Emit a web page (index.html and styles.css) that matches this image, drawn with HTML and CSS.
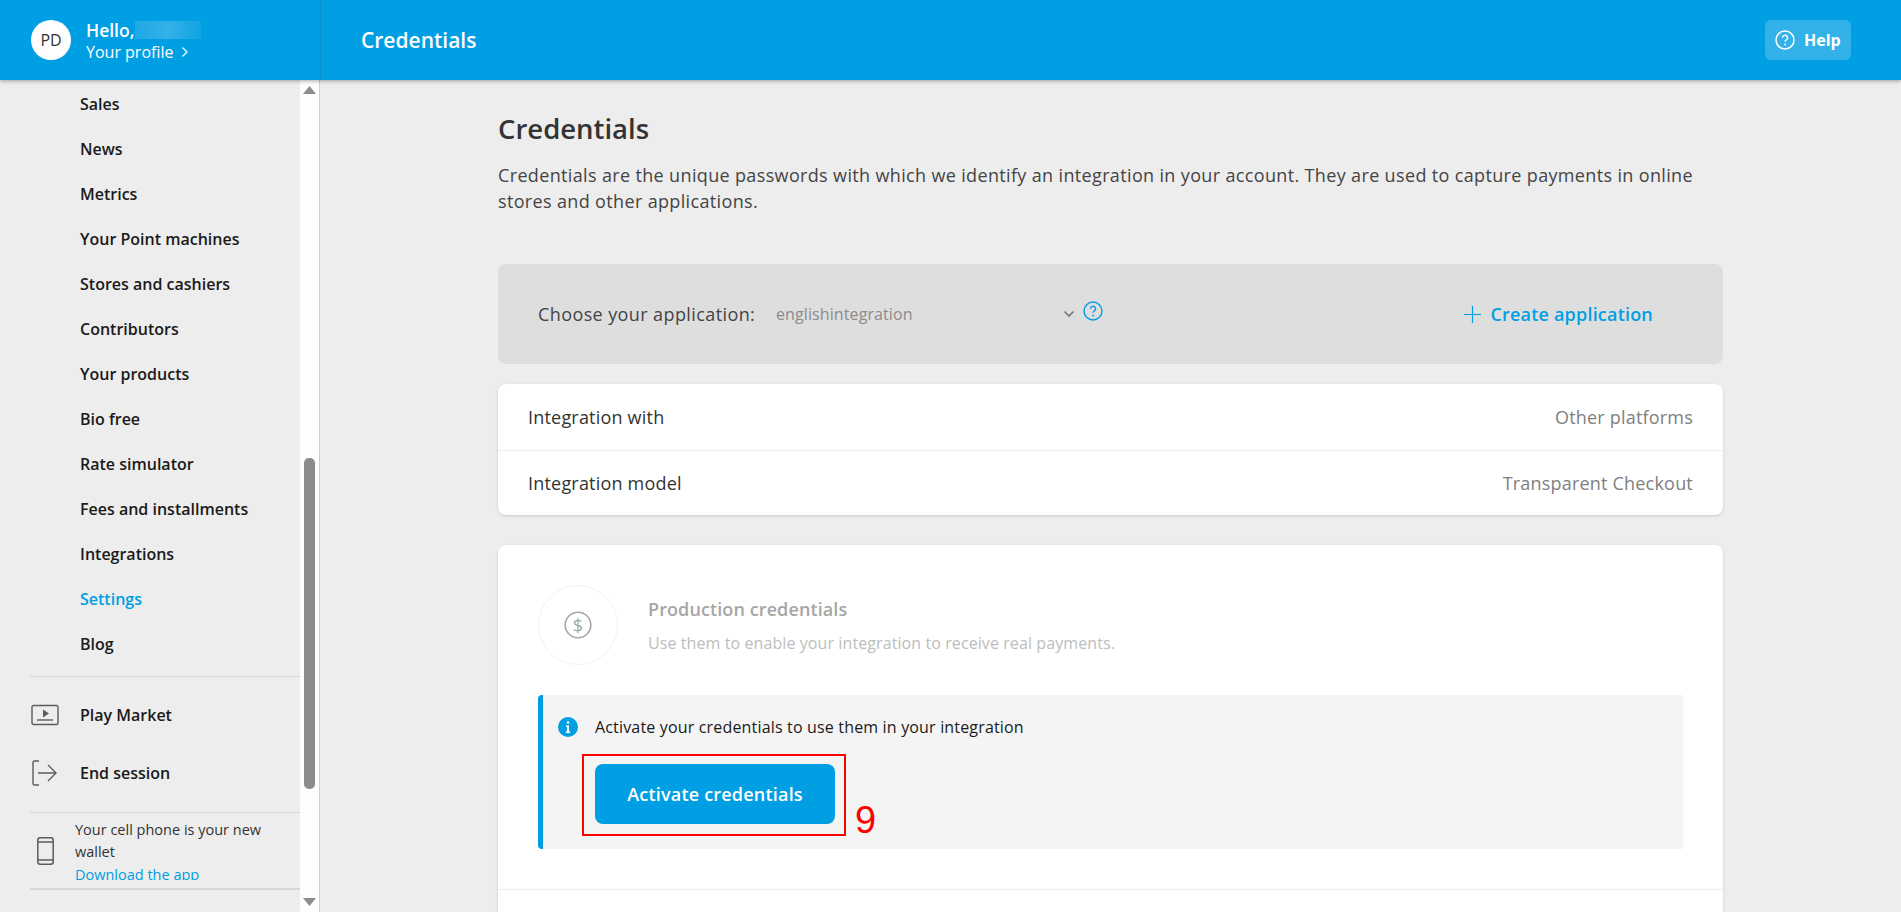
FILE: index.html
```html
<!DOCTYPE html>
<html lang="en">
<head>
<meta charset="utf-8">
<title>Credentials</title>
<link rel="stylesheet" href="styles.css">
</head>
<body>
<header class="topbar">
  <div class="profile">
    <div class="avatar">PD</div>
    <div class="profile-text">
      <div class="hello">Hello,<span class="blur"></span></div>
      <div class="your-profile">Your profile
        <svg class="chev-r" width="8" height="12" viewBox="0 0 8 12"><path d="M1.500 1.500 6 6l-4.500 4.500" fill="none" stroke="#fff" stroke-width="1.200"/></svg>
      </div>
    </div>
  </div>
  <div class="top-title">Credentials</div>
  <a class="help">
    <svg width="20" height="20" viewBox="0 0 20 20"><circle cx="10" cy="10" r="9" fill="none" stroke="#fff" stroke-width="1.500"/><path d="M7.500 7.800a2.500 2.500 0 1 1 3.700 2.200c-.8.500-1.200.9-1.200 1.800" fill="none" stroke="#fff" stroke-width="1.400"/><circle cx="10" cy="14.500" r=".9" fill="#fff"/></svg>
    <span>Help</span>
  </a>
</header>
<div class="shell">
  <aside class="sidebar">
    <div class="side-content">
      <nav class="menu">
        <a class="menu-item">Sales</a>
        <a class="menu-item">News</a>
        <a class="menu-item">Metrics</a>
        <a class="menu-item">Your Point machines</a>
        <a class="menu-item">Stores and cashiers</a>
        <a class="menu-item">Contributors</a>
        <a class="menu-item">Your products</a>
        <a class="menu-item">Bio free</a>
        <a class="menu-item">Rate simulator</a>
        <a class="menu-item">Fees and installments</a>
        <a class="menu-item">Integrations</a>
        <a class="menu-item active">Settings</a>
        <a class="menu-item">Blog</a>
      </nav>
      <div class="extra">
        <a class="extra-item">
          <svg class="extra-icon" width="28" height="22" viewBox="0 0 28 22"><rect x="1" y="1.500" width="26" height="19" rx="1.500" fill="none" stroke="#5c5c5c" stroke-width="1.400"/><path d="M12 5.500l6 4-6 4z" fill="#5c5c5c"/><path d="M6 16h16" stroke="#5c5c5c" stroke-width="1.400"/></svg>
          <span>Play Market</span>
        </a>
        <a class="extra-item">
          <svg class="extra-icon" width="28" height="26" viewBox="0 0 28 26"><path d="M8 1H3.500C2.600 1 2 1.600 2 2.500v21c0 .9.600 1.500 1.500 1.500H8" fill="none" stroke="#5c5c5c" stroke-width="1.400"/><path d="M7 13h18M17 5l8 8-8 8" fill="none" stroke="#5c5c5c" stroke-width="1.400"/></svg>
          <span>End session</span>
        </a>
      </div>
      <div class="promo">
        <svg class="promo-icon" width="17" height="28" viewBox="0 0 17 28"><rect x=".8" y=".8" width="15.400" height="26.400" rx="2.500" fill="none" stroke="#5c5c5c" stroke-width="1.500"/><path d="M1 5h15M1 23h15" stroke="#5c5c5c" stroke-width="1.300"/></svg>
        <div class="promo-text">
          <p>Your cell phone is your new wallet</p>
          <a>Download the app</a>
        </div>
      </div>
    </div>
    <div class="scrollbar">
      <svg class="sb-arrow" width="13" height="8" viewBox="0 0 13 8"><path d="M6.500 0 13 8H0z" fill="#8c8c8c"/></svg>
      <div class="sb-track"><div class="sb-thumb"></div></div>
      <svg class="sb-arrow" width="13" height="8" viewBox="0 0 13 8"><path d="M6.500 8 13 0H0z" fill="#8c8c8c"/></svg>
    </div>
  </aside>
  <main class="main">
    <h1 class="page-title">Credentials</h1>
    <p class="page-desc">Credentials are the unique passwords with which we identify an integration in your account. They are used to capture payments in online stores and other applications.</p>
    <section class="app-select">
      <span class="app-label">Choose your application:</span>
      <span class="app-value">englishintegration</span>
      <svg class="app-chev" width="12" height="8" viewBox="0 0 12 8"><path d="M1.500 1.500 6 6l4.500-4.500" fill="none" stroke="#777" stroke-width="1.600"/></svg>
      <svg class="app-q" width="20" height="20" viewBox="0 0 20 20"><circle cx="10" cy="10" r="9" fill="none" stroke="#009ee3" stroke-width="1.400"/><path d="M7.500 7.800a2.500 2.500 0 1 1 3.700 2.200c-.8.500-1.200.9-1.200 1.800" fill="none" stroke="#009ee3" stroke-width="1.400"/><circle cx="10" cy="14.500" r=".9" fill="#009ee3"/></svg>
      <a class="create">
        <svg width="17" height="17" viewBox="0 0 17 17"><path d="M8.500 0v17M0 8.500h17" stroke="#009ee3" stroke-width="1.200"/></svg>
        <span>Create application</span>
      </a>
    </section>
    <section class="card info-card">
      <div class="info-row"><span>Integration with</span><span class="info-val">Other platforms</span></div>
      <div class="info-row"><span>Integration model</span><span class="info-val">Transparent Checkout</span></div>
    </section>
    <section class="card prod-card">
      <div class="prod-body">
        <div class="prod-head">
          <div class="prod-circle">
            <svg width="28" height="28" viewBox="0 0 28 28"><circle cx="14" cy="14" r="12.800" fill="none" stroke="#a6a6a6" stroke-width="1.600"/><text x="14" y="20.500" text-anchor="middle" class="dollar">$</text></svg>
          </div>
          <div>
            <div class="prod-title">Production credentials</div>
            <div class="prod-sub">Use them to enable your integration to receive real payments.</div>
          </div>
        </div>
        <div class="alert">
          <div class="alert-line">
            <svg class="alert-icon" width="20" height="20" viewBox="0 0 20 20"><circle cx="10" cy="10" r="10" fill="#009ee3"/><circle cx="10" cy="5.500" r="1.300" fill="#fff"/><path d="M8 8.500h3v6h1.200V16H7.800v-1.500H9V10H8z" fill="#fff"/></svg>
            <span>Activate your credentials to use them in your integration</span>
          </div>
          <div class="btn-wrap">
            <button class="btn">Activate credentials</button>
            <span class="mark"></span>
            <span class="mark-num">9</span>
          </div>
        </div>
      </div>
    </section>
  </main>
</div>
</body>
</html>
```
FILE: styles.css
```css
* { box-sizing: border-box; }
html, body { margin: 0; height: 100%; overflow: hidden; }
body {
  font-family: "Open Sans", "Liberation Sans", sans-serif;
  background: #ededed;
  color: #333;
  display: flex;
  flex-direction: column;
  height: 912px;
}
.topbar {
  flex: 0 0 80px;
  display: flex;
  align-items: center;
  background: #009ee3;
  color: #fff;
  box-shadow: 0 1px 4px rgba(0,0,0,.35);
  position: relative;
  z-index: 2;
}
.profile {
  width: 321px;
  height: 80px;
  padding-left: 31px;
  display: flex;
  align-items: center;
  gap: 15px;
  border-right: 1px solid #0a92cf;
}
.avatar {
  width: 40px;
  height: 40px;
  border-radius: 50%;
  background: #fff;
  color: #333;
  font-size: 16px;
  display: flex;
  align-items: center;
  justify-content: center;
}
.profile-text { padding-top: 2px; }
.hello {
  font-size: 17.500px;
  font-weight: 600;
  line-height: 22px;
  display: flex;
  align-items: center;
}
.blur {
  display: inline-block;
  width: 66px;
  height: 18px;
  margin-left: 1px;
  background: linear-gradient(90deg, #1ea9e6, #33b1e8 50%, #12a4e4);
}
.your-profile { font-size: 16px; line-height: 22px; display: flex; align-items: center; gap: 8px; }
.top-title { margin-left: 40px; font-size: 21px; font-weight: 600; flex: 1; }
.help {
  width: 86px;
  height: 40px;
  margin-right: 50px;
  padding-left: 10px;
  border-radius: 6px;
  background: #33b1e9;
  display: flex;
  align-items: center;
  gap: 9px;
  font-size: 16px;
  font-weight: 700;
}
.shell { flex: 1; display: flex; min-height: 0; }
.sidebar {
  flex: 0 0 320px;
  display: flex;
  border-right: 1px solid #cfcfcf;
  overflow: hidden;
}
.side-content { flex: 1; padding-left: 30px; min-width: 0; }
.menu { padding: 1px 0 10px; border-bottom: 1px solid #d6d6d6; }
.menu-item {
  display: flex;
  align-items: center;
  height: 45px;
  padding-left: 50px;
  font-size: 16px;
  font-weight: 600;
  color: #1a1a1a;
}
.menu-item.active { color: #009ee3; }
.extra { padding: 9px 0 10px; border-bottom: 1px solid #d6d6d6; }
.extra-item {
  height: 58px;
  display: flex;
  align-items: center;
  font-size: 16px;
  font-weight: 600;
  color: #1a1a1a;
}
.extra-icon { margin-left: 1px; margin-right: 21px; }
.promo {
  height: 77px;
  display: flex;
  align-items: center;
  border-bottom: 2px solid #d6d6d6;
}
.promo-icon { margin-left: 7px; margin-right: 21px; flex: none; }
.promo-text { width: 205px; font-size: 14.500px; line-height: 22px; height: 67px; overflow: hidden; align-self: flex-start; padding-top: 6px; }
.promo-text p { margin: 0; color: #333; }
.promo-text a { color: #009ee3; display: block; line-height: 24px; }
.scrollbar {
  flex: 0 0 19px;
  background: #fdfdfd;
  display: flex;
  flex-direction: column;
  align-items: center;
  padding: 6px 0 6px;
}
.sb-arrow { flex: none; }
.sb-track { flex: 1; width: 11px; padding-top: 364px; }
.sb-thumb { width: 11px; height: 331px; background: #8c8c8c; border-radius: 5px; }
.main { flex: 1; padding: 0 178px; min-width: 0; min-height: 0; overflow: hidden; }
.page-title { margin: 32px 0 0; font-size: 27.500px; line-height: 34px; font-weight: 600; color: #333; }
.page-desc { margin: 17px 0 0; font-size: 18px; letter-spacing: .35px; line-height: 25.500px; color: #444; }
.app-select {
  margin-top: 50px;
  height: 100px;
  background: #dedede;
  border-radius: 8px;
  padding: 0 70px 0 40px;
  display: flex;
  align-items: center;
}
.app-label { font-size: 18px; letter-spacing: .4px; width: 238px; flex: none; color: #444; white-space: nowrap; }
.app-value { font-size: 16px; letter-spacing: .1px; width: 287px; flex: none; color: #8c8c8c; }
.app-chev { flex: none; }
.app-q { margin-left: 8px; margin-top: -6px; flex: none; }
.create { margin-left: auto; display: flex; align-items: center; gap: 9px; color: #009ee3; font-size: 18px; letter-spacing: .2px; font-weight: 600; }
.card { background: #fff; border-radius: 8px; box-shadow: 0 1px 3px rgba(0,0,0,.15); }
.info-card { margin-top: 20px; }
.info-row {
  height: 65.500px;
  padding: 0 30px;
  display: flex;
  justify-content: space-between;
  align-items: center;
  font-size: 18px;
  letter-spacing: .2px;
  color: #333;
}
.info-row + .info-row { border-top: 1px solid #ededed; }
.info-val { color: #808080; }
.prod-card { margin-top: 30px; height: 500px; }
.prod-body { height: 345px; padding: 40px 40px 0; border-bottom: 1px solid #ededed; }
.prod-head { display: flex; align-items: center; gap: 30px; height: 80px; }
.prod-circle {
  width: 80px;
  height: 80px;
  flex: none;
  border: 1px solid #f2f2f2;
  border-radius: 50%;
  display: flex;
  align-items: center;
  justify-content: center;
}
.dollar { font-size: 18px; fill: #a6a6a6; font-family: "Open Sans", sans-serif; }
.prod-title { font-size: 18px; letter-spacing: .1px; font-weight: 600; color: #a6a6a6; }
.prod-sub { margin-top: 11px; font-size: 16px; letter-spacing: .09px; color: #bdbdbd; }
.alert {
  margin-top: 30px;
  height: 154px;
  background: #f4f4f4;
  border-left: 5px solid #009ee3;
  border-radius: 4px 0 0 4px;
  padding: 21px 0 0 15px;
}
.alert-line { display: flex; align-items: center; gap: 17px; font-size: 16px; letter-spacing: .17px; color: #1a1a1a; }
.btn-wrap { position: relative; margin: 26px 0 0 37px; width: 240px; height: 60px; }
.btn {
  width: 240px;
  height: 60px;
  border: 0;
  border-radius: 8px;
  background: #009ee3;
  color: #fff;
  font: 600 18px "Open Sans", sans-serif;
  letter-spacing: .2px;
}
.mark {
  position: absolute;
  left: -13px;
  top: -10px;
  width: 264px;
  height: 82px;
  border: 2px solid #f00;
}
.mark-num {
  position: absolute;
  left: 260px;
  top: 37px;
  font: 38px/38px "Liberation Sans", sans-serif;
  color: #f00;
}
```
